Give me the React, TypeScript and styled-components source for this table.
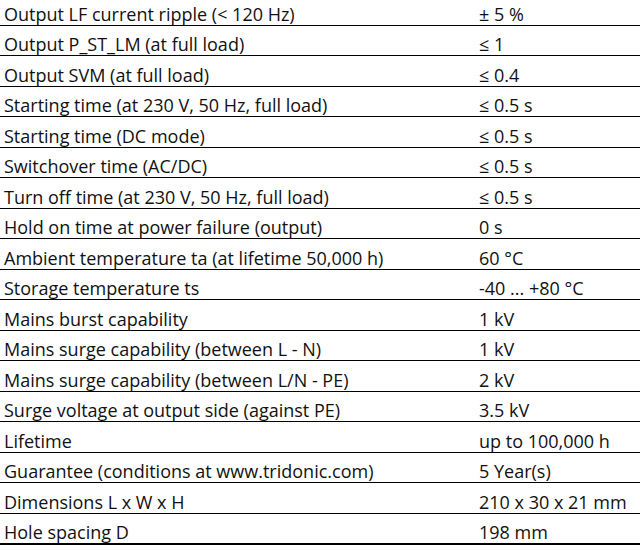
import { createGlobalStyle } from "styled-components";
import styled from "styled-components";

const GlobalStyle = createGlobalStyle`
  html, body {
    margin: 0;
    padding: 0;
    background: #ffffff;
  }
`;

const Table = styled.table`
  width: 640px;
  margin-top: -5.5px;
  border-collapse: collapse;
  font-family: "Open Sans", sans-serif;
  font-size: 18px;
  color: #111111;
`;

const Row = styled.tr<{ $last?: boolean }>`
  height: 30.5px;
  border-bottom: ${(p) => (p.$last ? "2px" : "1px")} solid #000;
`;

const Cell = styled.td<{ $value?: boolean }>`
  padding: 0 0 0 ${(p) => (p.$value ? "11px" : "4px")};
  vertical-align: bottom;
  line-height: 22px;
  white-space: nowrap;
  width: ${(p) => (p.$value ? "auto" : "464px")};
`;

const rows: [string, string][] = [
  ["Output LF current ripple (< 120 Hz)", "± 5 %"],
  ["Output P_ST_LM (at full load)", "≤ 1"],
  ["Output SVM (at full load)", "≤ 0.4"],
  ["Starting time (at 230 V, 50 Hz, full load)", "≤ 0.5 s"],
  ["Starting time (DC mode)", "≤ 0.5 s"],
  ["Switchover time (AC/DC)", "≤ 0.5 s"],
  ["Turn off time (at 230 V, 50 Hz, full load)", "≤ 0.5 s"],
  ["Hold on time at power failure (output)", "0 s"],
  ["Ambient temperature ta (at lifetime 50,000 h)", "60 °C"],
  ["Storage temperature ts", "-40 ... +80 °C"],
  ["Mains burst capability", "1 kV"],
  ["Mains surge capability (between L - N)", "1 kV"],
  ["Mains surge capability (between L/N - PE)", "2 kV"],
  ["Surge voltage at output side (against PE)", "3.5 kV"],
  ["Lifetime", "up to 100,000 h"],
  ["Guarantee (conditions at www.tridonic.com)", "5 Year(s)"],
  ["Dimensions L x W x H", "210 x 30 x 21 mm"],
  ["Hole spacing D", "198 mm"],
];

export default function App() {
  return (
    <>
      <GlobalStyle />
      <Table>
        <tbody>
          {rows.map(([label, value], i) => (
            <Row key={label} $last={i === rows.length - 1}>
              <Cell>{label}</Cell>
              <Cell $value>{value}</Cell>
            </Row>
          ))}
        </tbody>
      </Table>
    </>
  );
}
